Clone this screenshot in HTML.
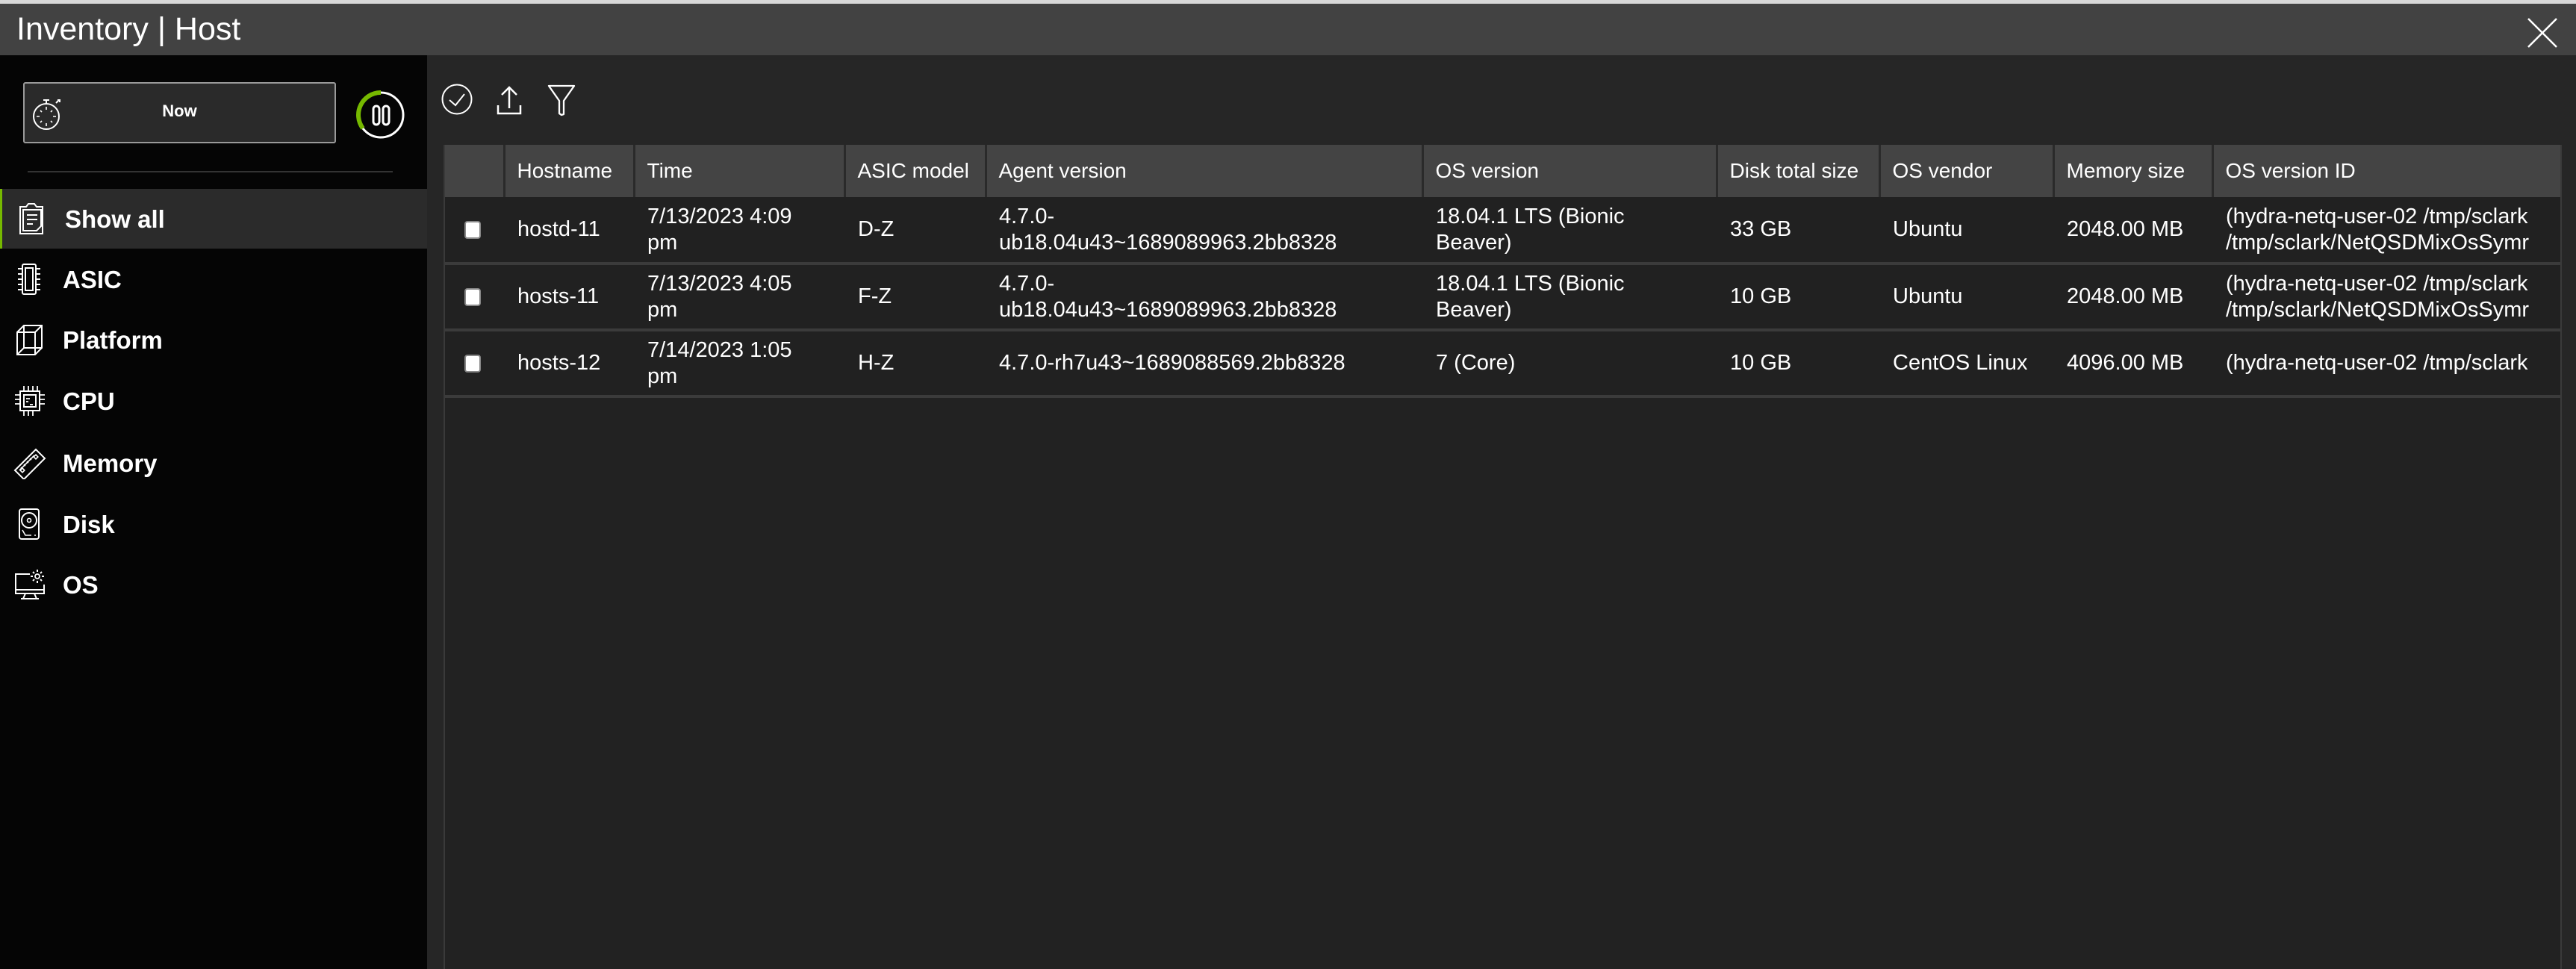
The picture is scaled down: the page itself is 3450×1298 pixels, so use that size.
<!DOCTYPE html>
<html><head><meta charset="utf-8"><style>
*{margin:0;padding:0;box-sizing:border-box}
body{width:3450px;height:1298px;background:#262626;font-family:"Liberation Sans",sans-serif;color:#fff;position:relative;overflow:hidden}
.topline{position:absolute;left:0;top:0;width:3450px;height:5px;background:#d8d8d8}
.title{position:absolute;left:0;top:5px;width:3450px;height:69px;background:#424242}
.title span{position:absolute;left:22px;top:10px;font-size:43px;font-weight:300;color:#fff}
.side{position:absolute;left:0;top:74px;width:572px;height:1224px;background:#050505}
.nowbtn{position:absolute;left:31px;top:110px;width:419px;height:82px;background:#2a2a2a;border:2px solid #9a9a9a;border-radius:3px}
.nowbtn span{position:absolute;left:0;width:100%;text-align:center;top:24px;font-size:22px;font-weight:bold}
.sep{position:absolute;left:37px;top:229px;width:489px;height:2px;background:#333}
.item{position:absolute;left:0;width:572px;height:80px}
.item .t{position:absolute;left:84px;top:22px;font-size:33px;font-weight:bold}
.item svg{position:absolute;left:18px;top:18px}
.active{background:#2b2b2b;border-left:3px solid #76b900}
.main{position:absolute;left:572px;top:74px;width:2878px;height:1224px;background:#2a2a2a}
.tbox{position:absolute;left:594px;top:194px;width:2837px;height:1104px;background:#222;border-left:2px solid #3a3a3a;border-right:2px solid #3a3a3a;overflow:hidden}
table{border-collapse:collapse;table-layout:fixed;width:3300px}
th{background:#444;height:70px;font-weight:normal;font-size:28px;text-align:left;padding-left:16px;border-left:3px solid #2a2a2a;white-space:nowrap;overflow:hidden}
th:first-child{border-left:none}
td{background:#212121;font-size:29px;padding-left:18px;line-height:35px;border-bottom:4px solid #3b3b3b;white-space:nowrap;overflow:hidden}
tr.r td{height:89px}
.cb{display:inline-block;width:22px;height:24px;background:#fff;border:2px solid #888;border-radius:4px;margin-left:26px;vertical-align:middle}
</style></head><body>
<div class="topline"></div>
<div class="title"><span>Inventory | Host</span>
<svg style="position:absolute;left:3384px;top:18px" width="42" height="42" viewBox="0 0 42 42"><path d="M2 2L40 40M40 2L2 40" stroke="#fff" stroke-width="2.5"/></svg>
</div>
<div class="side">
</div>
<div class="nowbtn"><span>Now</span>
<svg style="position:absolute;left:10px;top:16px" width="42" height="48" viewBox="0 0 42 48"><circle cx="19" cy="28" r="17" fill="none" stroke="#fff" stroke-width="2"/><path d="M19 6v5M15 6h8M32 10l4-4M34 6h3v3" stroke="#fff" stroke-width="2" fill="none"/><path d="M19 15v4M19 37v4M6 28h4M28 28h4M11 20l2 2M27 20l-2 2M11 36l2-2M27 36l-2-2" stroke="#fff" stroke-width="1.6"/></svg>
</div>
<svg style="position:absolute;left:474px;top:118px" width="72" height="72" viewBox="0 0 72 72"><circle cx="36" cy="36" r="30" fill="none" stroke="#fff" stroke-width="3"/><path d="M36 6 A30 30 0 0 0 12 54" fill="none" stroke="#76b900" stroke-width="6"/><rect x="26" y="24" width="8" height="25" rx="4" fill="none" stroke="#fff" stroke-width="3"/><rect x="39" y="24" width="8" height="25" rx="4" fill="none" stroke="#fff" stroke-width="3"/></svg>
<div class="sep"></div>
<div class="item active" style="top:253px"><svg width="44" height="44" viewBox="0 0 44 44"><path d="M6 6h8l3-4h8l3 4h8v36H6z" fill="none" stroke="#fff" stroke-width="2"/><path d="M10 10h24v22l-6 6H10z" fill="none" stroke="#fff" stroke-width="2"/><path d="M15 17h14M15 23h14M15 29h8" stroke="#fff" stroke-width="2"/></svg><span class="t">Show all</span></div>
<div class="item" style="top:334px"><svg width="44" height="44" viewBox="0 0 44 44"><rect x="12" y="2" width="18" height="40" rx="2" fill="none" stroke="#fff" stroke-width="2"/><rect x="16" y="7" width="10" height="30" fill="none" stroke="#fff" stroke-width="2"/><path d="M6 8h6M6 15h6M6 22h6M6 29h6M6 36h6M30 8h6M30 15h6M30 22h6M30 29h6M30 36h6" stroke="#fff" stroke-width="2"/></svg><span class="t">ASIC</span></div>
<div class="item" style="top:415px"><svg width="44" height="44" viewBox="0 0 44 44"><path d="M5 12L14 3h24v30l-9 9H5z M5 12h24v30 M29 12l9-9 M14 3v30H38 M14 33l-9 9" fill="none" stroke="#fff" stroke-width="2"/></svg><span class="t">Platform</span></div>
<div class="item" style="top:497px"><svg width="44" height="44" viewBox="0 0 44 44"><rect x="9" y="9" width="26" height="26" fill="none" stroke="#fff" stroke-width="2"/><rect x="14" y="14" width="16" height="16" fill="none" stroke="#fff" stroke-width="2"/><path d="M14 2v7M20 2v7M26 2v7M32 2v7M14 35v7M20 35v7M26 35v7M2 14h7M2 20h7M2 26h7M35 14h7M35 20h7M35 26h7M17 19h5M17 23h3M22 27h4" stroke="#fff" stroke-width="1.8"/></svg><span class="t">CPU</span></div>
<div class="item" style="top:580px"><svg width="44" height="44" viewBox="0 0 44 44"><path d="M2 32L30 4l12 12-28 28z" fill="none" stroke="#fff" stroke-width="2"/><path d="M8 32l20-20M10 28l2 2M14 24l2 2M18 20l2 2M22 16l2 2" stroke="#fff" stroke-width="1.6"/><rect x="10" y="30" width="4" height="4" fill="none" stroke="#fff" stroke-width="1.6" transform="rotate(-45 12 32)"/><rect x="28" y="12" width="4" height="4" fill="none" stroke="#fff" stroke-width="1.6" transform="rotate(-45 30 14)"/></svg><span class="t">Memory</span></div>
<div class="item" style="top:662px"><svg width="44" height="44" viewBox="0 0 44 44"><rect x="8" y="2" width="26" height="40" rx="3" fill="none" stroke="#fff" stroke-width="2"/><circle cx="21" cy="17" r="10" fill="none" stroke="#fff" stroke-width="2"/><circle cx="21" cy="17" r="2.5" fill="none" stroke="#fff" stroke-width="1.6"/><path d="M12 30l4 7h8" fill="none" stroke="#fff" stroke-width="1.6"/><circle cx="29" cy="37" r="1" fill="#fff"/></svg><span class="t">Disk</span></div>
<div class="item" style="top:743px"><svg width="46" height="46" viewBox="0 0 46 46"><path d="M22 8H3v26h38v-12M3 29h38M16 34l-3 7h18l-3-7M10 41h24" fill="none" stroke="#fff" stroke-width="2"/><circle cx="32" cy="11" r="3" fill="none" stroke="#fff" stroke-width="1.8"/><path d="M32 2v3M32 17v3M23 11h3M38 11h3M26 5l2 2M36 15l2 2M26 17l2-2M36 7l2-2" stroke="#fff" stroke-width="2"/></svg><span class="t">OS</span></div>

<svg style="position:absolute;left:590px;top:111px" width="44" height="44" viewBox="0 0 44 44"><circle cx="22" cy="22" r="19.5" fill="none" stroke="#fff" stroke-width="2"/><path d="M12 23l8 7 12-15" fill="none" stroke="#fff" stroke-width="2"/></svg>
<svg style="position:absolute;left:664px;top:115px" width="36" height="40" viewBox="0 0 36 40"><path d="M18 2v28M8 12L18 2l10 10M3 26v11h30V26" fill="none" stroke="#fff" stroke-width="2.5"/></svg>
<svg style="position:absolute;left:732px;top:112px" width="40" height="44" viewBox="0 0 40 44"><path d="M3 3h34L23 23v18l-3 1-3-2V23z" fill="none" stroke="#fff" stroke-width="2.3" stroke-linejoin="round"/></svg>

<div class="tbox"><table>
<colgroup><col style="width:79px"><col style="width:174px"><col style="width:282px"><col style="width:189px"><col style="width:585px"><col style="width:394px"><col style="width:218px"><col style="width:233px"><col style="width:213px"><col style="width:933px"></colgroup>
<tr><th></th><th>Hostname</th><th>Time</th><th>ASIC model</th><th>Agent version</th><th>OS version</th><th>Disk total size</th><th>OS vendor</th><th>Memory size</th><th>OS version ID</th></tr>
<tr class="r"><td style="padding-left:0"><span class="cb"></span></td><td>hostd-11</td><td>7/13/2023 4:09<br>pm</td><td>D-Z</td><td>4.7.0-<br>ub18.04u43~1689089963.2bb8328</td><td>18.04.1 LTS (Bionic<br>Beaver)</td><td>33 GB</td><td>Ubuntu</td><td>2048.00 MB</td><td>(hydra-netq-user-02 /tmp/sclark<br>/tmp/sclark/NetQSDMixOsSymr</td></tr>
<tr class="r"><td style="padding-left:0"><span class="cb"></span></td><td>hosts-11</td><td>7/13/2023 4:05<br>pm</td><td>F-Z</td><td>4.7.0-<br>ub18.04u43~1689089963.2bb8328</td><td>18.04.1 LTS (Bionic<br>Beaver)</td><td>10 GB</td><td>Ubuntu</td><td>2048.00 MB</td><td>(hydra-netq-user-02 /tmp/sclark<br>/tmp/sclark/NetQSDMixOsSymr</td></tr>
<tr class="r"><td style="padding-left:0"><span class="cb"></span></td><td>hosts-12</td><td>7/14/2023 1:05<br>pm</td><td>H-Z</td><td>4.7.0-rh7u43~1689088569.2bb8328</td><td>7 (Core)</td><td>10 GB</td><td>CentOS Linux</td><td>4096.00 MB</td><td>(hydra-netq-user-02 /tmp/sclark</td></tr>
</table></div>
</body></html>
